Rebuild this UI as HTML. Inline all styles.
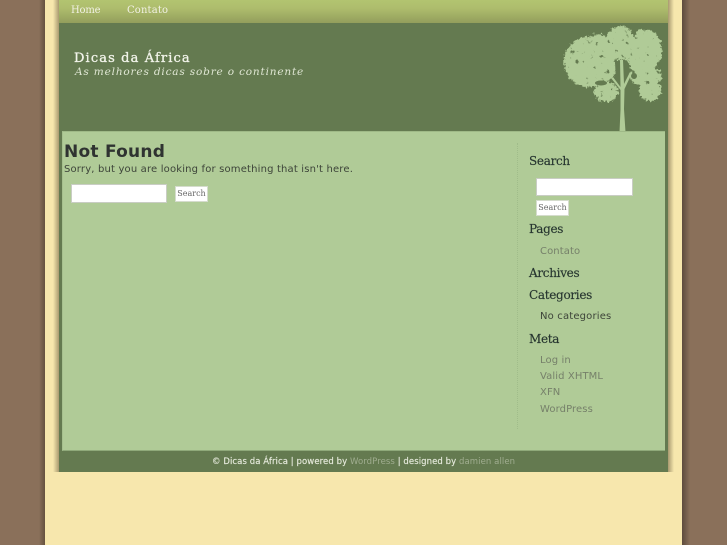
<!DOCTYPE html>
<html lang="pt">
<head>
<meta charset="utf-8">
<title>Dicas da África</title>
<style>
html,body{margin:0;padding:0;width:727px;height:545px;overflow:hidden;background:#8a705a}
body{position:relative;font-family:"DejaVu Sans",sans-serif}
div,a,span{position:absolute;white-space:nowrap}
.serif{font-family:"DejaVu Serif",serif}
.h{font-family:"DejaVu Serif",serif;font-size:12px;color:#26352f;left:529px;line-height:14px;letter-spacing:-.3px;-webkit-text-stroke:.15px #26352f}
.l{font-size:10px;color:#76806a;left:540px;line-height:14px;letter-spacing:.1px}
.in{background:#fff;border:1px solid #c9cdc4;box-sizing:border-box}
.btn{background:#fff;border:1px solid #d5dccd;box-sizing:border-box;font-family:"DejaVu Serif",serif;font-size:8px;color:#666;text-align:center;line-height:14px}
</style>
</head>
<body>
<div style="left:39px;top:0;width:6px;height:545px;background:linear-gradient(90deg,#8a705a,#66523f)"></div>
<div style="left:682px;top:0;width:8px;height:545px;background:linear-gradient(90deg,#5d4b3d,#8a705a)"></div>
<div style="left:45px;top:0;width:637px;height:545px;background:#f7e7ad"></div>
<div style="left:53px;top:0;width:6px;height:472px;background:linear-gradient(90deg,#f7e7ad,#a89a70)"></div>
<div style="left:668px;top:0;width:6px;height:472px;background:linear-gradient(90deg,#a89a70,#f7e7ad)"></div>

<div style="left:59px;top:0;width:609px;height:472px;background:#647a50"></div>
<div style="left:59px;top:0;width:609px;height:23px;background:linear-gradient(180deg,#b2c470 0,#aebd6d 35%,#939e5c 100%)"></div>
<div class="serif" style="left:71px;top:4px;font-size:10px;line-height:14px;color:#f1f1e4;letter-spacing:-.2px">Home</div>
<div class="serif" style="left:127px;top:4px;font-size:10px;line-height:14px;color:#f1f1e4;letter-spacing:.15px">Contato</div>

<div class="serif" style="left:74px;top:50px;font-size:13px;line-height:17px;color:#f2f4ea;letter-spacing:1.12px;-webkit-text-stroke:.3px #f2f4ea">Dicas da África</div>
<div class="serif" style="left:75px;top:65px;font-size:10.5px;line-height:14px;font-style:italic;color:#dfe6d3;letter-spacing:.83px">As melhores dicas sobre o continente</div>

<svg style="position:absolute;left:0;top:0" width="727" height="545" viewBox="0 0 727 545">
<defs>
<filter id="r" x="-10%" y="-10%" width="120%" height="120%" color-interpolation-filters="sRGB">
<feTurbulence type="fractalNoise" baseFrequency="0.4" numOctaves="3" seed="11" result="n"/>
<feDisplacementMap in="SourceGraphic" in2="n" scale="6" xChannelSelector="R" yChannelSelector="G" result="d"/>
<feTurbulence type="fractalNoise" baseFrequency="0.2" numOctaves="3" seed="4" result="m"/>
<feColorMatrix in="m" type="matrix" values="0 0 0 0 0  0 0 0 0 0  0 0 0 0 0  0 0 0 9 -6.100" result="s"/>
<feComposite in="d" in2="s" operator="out" result="c"/>
<feGaussianBlur in="c" stdDeviation=".35"/>
</filter>
</defs>
<g filter="url(#r)" fill="#b0cb97">
<ellipse cx="588" cy="62" rx="24" ry="25"/><circle cx="601" cy="68" r="15"/><circle cx="598" cy="47" r="13"/>
<ellipse cx="620" cy="43" rx="15" ry="17"/><circle cx="608" cy="52" r="10"/><circle cx="632" cy="50" r="12"/>
<ellipse cx="647" cy="50" rx="15" ry="20"/><circle cx="638" cy="63" r="9"/><circle cx="640" cy="33" r="4"/>
<ellipse cx="646" cy="76" rx="16" ry="10"/>
<circle cx="650" cy="90" r="11"/><ellipse cx="606" cy="92" rx="12" ry="10"/>
</g>
<ellipse cx="601" cy="83" rx="6" ry="2.500" fill="#647a50"/>
<circle cx="634" cy="76" r="3" fill="#647a50"/>
<path d="M615 62h4v20h-3zM625 65h5l-3 9-2 2z" fill="#647a50"/>
<path d="M619.500 132L620.500 110V90L611 78l2-1 7.500 10L620 60h3l1 24 6-12 2 1-7.500 16-.5 20 1.500 23z" fill="#b0cb97"/>
</svg>

<div style="left:62px;top:131px;width:603px;height:320px;box-sizing:border-box;background:#b0cb97;border-top:1px solid #9fb987;border-bottom:1px solid #8fa97a;border-left:1px solid #a6c08e"></div>
<div style="left:517px;top:143px;height:286px;width:0;border-left:1px dotted #a0bc8a"></div>

<div style="left:64px;top:141px;font-size:17px;line-height:22px;font-weight:bold;color:#2f3331;letter-spacing:.25px">Not Found</div>
<div style="left:64px;top:163px;font-size:10px;line-height:14px;color:#3d4439;letter-spacing:.17px">Sorry, but you are looking for something that isn't here.</div>
<div class="in" style="left:71px;top:184px;width:96px;height:19px"></div>
<div class="btn" style="left:175px;top:186px;width:33px;height:16px">Search</div>

<div class="h" style="top:154px">Search</div>
<div class="in" style="left:536px;top:178px;width:97px;height:18px"></div>
<div class="btn" style="left:536px;top:200px;width:33px;height:16px">Search</div>
<div class="h" style="top:222px">Pages</div>
<div class="l" style="top:245px">Contato</div>
<div class="h" style="top:266px">Archives</div>
<div class="h" style="top:288px">Categories</div>
<div class="l" style="top:310px;color:#3d4439;letter-spacing:.17px">No categories</div>
<div class="h" style="top:332px">Meta</div>
<div class="l" style="top:354px">Log in</div>
<div class="l" style="top:370px">Valid XHTML</div>
<div class="l" style="top:386px">XFN</div>
<div class="l" style="top:403px">WordPress</div>

<div style="left:212px;top:456px;font-size:8.500px;line-height:12px;color:#e6eadc;letter-spacing:.08px;-webkit-text-stroke:.15px #e6eadc">© Dicas da África | powered by <span style="position:static;color:#a0ad90;-webkit-text-stroke:0">WordPress</span> | designed by <span style="position:static;color:#a0ad90;-webkit-text-stroke:0">damien allen</span></div>
</body>
</html>
